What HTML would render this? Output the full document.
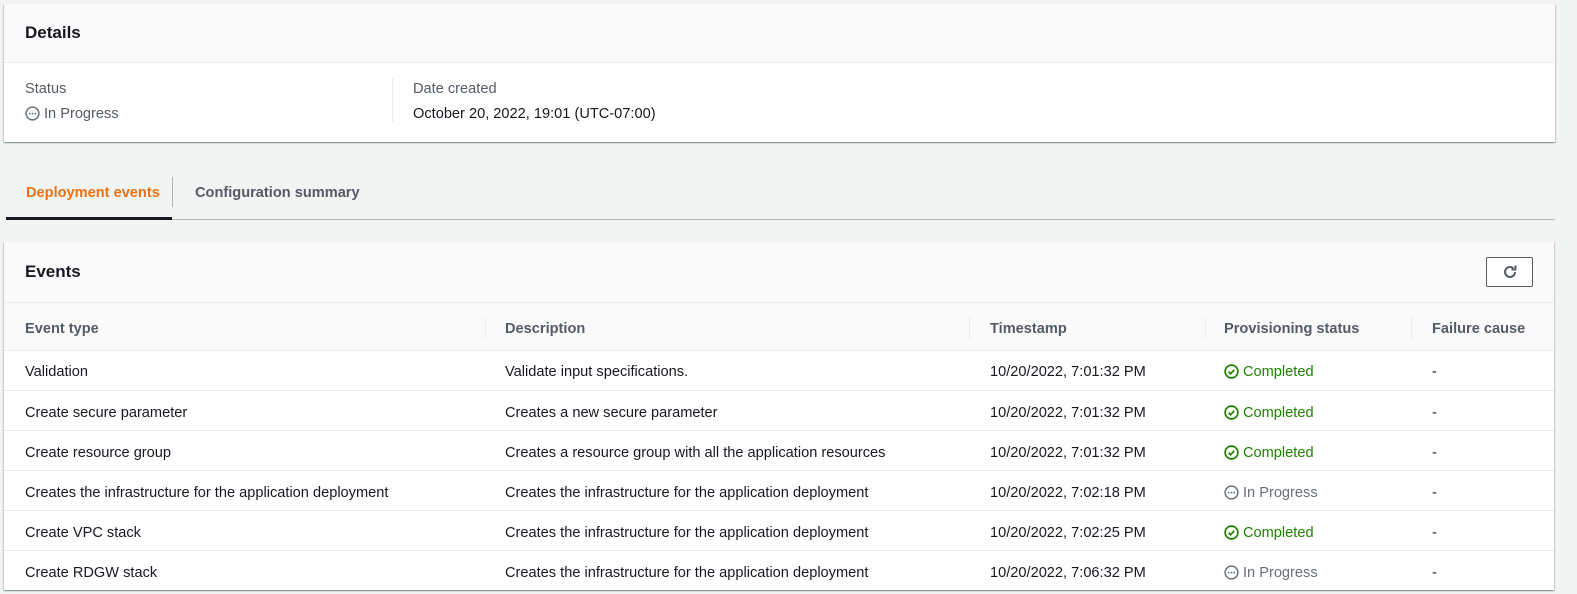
<!DOCTYPE html>
<html><head><style>
html,body{overflow:hidden}
body{margin:0;width:1577px;height:594px;background:#f2f3f3;font-family:"Liberation Sans",sans-serif;font-size:14.6px;color:#16191f;position:relative}
.card{position:absolute;background:#fff;box-shadow:0 1px 1px 0 rgba(0,28,36,.3),1px 1px 1px 0 rgba(0,28,36,.15),-1px 1px 1px 0 rgba(0,28,36,.15)}
.a{position:absolute}
.h2{font-weight:bold;font-size:17px;position:absolute;left:21px}
.lbl{color:#545b64}
.th{position:absolute;top:2px;height:48px;line-height:48px;font-weight:bold;color:#545b64}
.div{position:absolute;top:14px;height:22px;border-left:1px solid #eaeded}
.row{position:absolute;left:0;width:100%;height:40px;border-top:1px solid #eaeded;box-sizing:border-box;line-height:39px}
.row span{position:absolute;top:3px}
.ok{color:#1d8102}.ip{color:#687078}
svg{vertical-align:-3px;margin-right:4px}
</style></head><body>
<div class="card" style="left:4px;top:4px;width:1551px;height:138px">
 <div class="a" style="left:0;top:0;width:100%;height:58px;background:#fafafa;border-bottom:1px solid #eaeded"><div class="h2" style="top:19px">Details</div></div>
 <div class="a lbl" style="left:21px;top:77px">Status</div>
 <div class="a" style="left:21px;top:102px;color:#545b64"><svg width="15" height="15" viewBox="0 0 16 16"><circle cx="8" cy="8" r="6.8" fill="none" stroke="#687078" stroke-width="1.6"/><circle cx="5" cy="8" r="1" fill="#687078"/><circle cx="8" cy="8" r="1" fill="#687078"/><circle cx="11" cy="8" r="1" fill="#687078"/></svg>In Progress</div>
 <div class="a" style="left:388px;top:74px;height:44px;border-left:1px solid #eaeded"></div>
 <div class="a lbl" style="left:409px;top:77px">Date created</div>
 <div class="a" style="left:409px;top:102px">October 20, 2022, 19:01 (UTC-07:00)</div>
</div>
<div class="a" style="left:6px;top:219px;width:1549px;border-top:1px solid #aab7b8"></div>
<div class="a" style="left:6px;top:217px;width:166px;border-top:3px solid #16191f"></div>
<div class="a" style="left:26px;top:185px;font-weight:bold;color:#ec7211">Deployment events</div>
<div class="a" style="left:172px;top:177px;height:30px;border-left:1px solid #aab7b8"></div>
<div class="a" style="left:195px;top:185px;font-weight:bold;color:#545b64">Configuration summary</div>
<div class="card" style="left:4px;top:242px;width:1550px;height:348px">
 <div class="a" style="left:0;top:0;width:100%;height:60px;background:#fafafa;border-bottom:1px solid #eaeded"><div class="h2" style="top:20px">Events</div>
  <div class="a" style="left:1482px;top:15px;width:47px;height:30px;border:1px solid #545b64;border-radius:2px;background:#fff;box-sizing:border-box;text-align:center"><svg width="16" height="16" viewBox="0 0 16 16" style="margin:6px 0 0 0"><path d="M13 8a5 5 0 1 1-1.6-3.7" fill="none" stroke="#545b64" stroke-width="2"/><path d="M13.5 1.5v4h-4" fill="none" stroke="#545b64" stroke-width="2"/></svg></div>
 </div>
 <div class="a" style="left:0;top:61px;width:100%;height:47px;background:#fafafa;border-bottom:1px solid #eaeded">
  <div class="th" style="left:21px">Event type</div>
  <div class="div" style="left:481px"></div><div class="th" style="left:501px">Description</div>
  <div class="div" style="left:965px"></div><div class="th" style="left:986px">Timestamp</div>
  <div class="div" style="left:1201px"></div><div class="th" style="left:1220px">Provisioning status</div>
  <div class="div" style="left:1407px"></div><div class="th" style="left:1428px">Failure cause</div>
 </div>
 <div class="a" style="top:108px;left:0;width:100%">
  <div class="row" style="top:0;border-top:none"><span style="left:21px">Validation</span><span style="left:501px">Validate input specifications.</span><span style="left:986px">10/20/2022, 7:01:32 PM</span><span class="ok" style="left:1220px"><svg width="15" height="15" viewBox="0 0 16 16"><circle cx="8" cy="8" r="6.8" fill="none" stroke="#1d8102" stroke-width="1.8"/><path d="M4.8 8.2l2.2 2.2 4-4.2" fill="none" stroke="#1d8102" stroke-width="1.8"/></svg>Completed</span><span style="left:1428px">-</span></div>
  <div class="row" style="top:40px"><span style="left:21px">Create secure parameter</span><span style="left:501px">Creates a new secure parameter</span><span style="left:986px">10/20/2022, 7:01:32 PM</span><span class="ok" style="left:1220px"><svg width="15" height="15" viewBox="0 0 16 16"><circle cx="8" cy="8" r="6.8" fill="none" stroke="#1d8102" stroke-width="1.8"/><path d="M4.8 8.2l2.2 2.2 4-4.2" fill="none" stroke="#1d8102" stroke-width="1.8"/></svg>Completed</span><span style="left:1428px">-</span></div>
  <div class="row" style="top:80px"><span style="left:21px">Create resource group</span><span style="left:501px">Creates a resource group with all the application resources</span><span style="left:986px">10/20/2022, 7:01:32 PM</span><span class="ok" style="left:1220px"><svg width="15" height="15" viewBox="0 0 16 16"><circle cx="8" cy="8" r="6.8" fill="none" stroke="#1d8102" stroke-width="1.8"/><path d="M4.8 8.2l2.2 2.2 4-4.2" fill="none" stroke="#1d8102" stroke-width="1.8"/></svg>Completed</span><span style="left:1428px">-</span></div>
  <div class="row" style="top:120px"><span style="left:21px">Creates the infrastructure for the application deployment</span><span style="left:501px">Creates the infrastructure for the application deployment</span><span style="left:986px">10/20/2022, 7:02:18 PM</span><span class="ip" style="left:1220px"><svg width="15" height="15" viewBox="0 0 16 16"><circle cx="8" cy="8" r="6.8" fill="none" stroke="#687078" stroke-width="1.6"/><circle cx="5" cy="8" r="1" fill="#687078"/><circle cx="8" cy="8" r="1" fill="#687078"/><circle cx="11" cy="8" r="1" fill="#687078"/></svg>In Progress</span><span style="left:1428px">-</span></div>
  <div class="row" style="top:160px"><span style="left:21px">Create VPC stack</span><span style="left:501px">Creates the infrastructure for the application deployment</span><span style="left:986px">10/20/2022, 7:02:25 PM</span><span class="ok" style="left:1220px"><svg width="15" height="15" viewBox="0 0 16 16"><circle cx="8" cy="8" r="6.8" fill="none" stroke="#1d8102" stroke-width="1.8"/><path d="M4.8 8.2l2.2 2.2 4-4.2" fill="none" stroke="#1d8102" stroke-width="1.8"/></svg>Completed</span><span style="left:1428px">-</span></div>
  <div class="row" style="top:200px"><span style="left:21px">Create RDGW stack</span><span style="left:501px">Creates the infrastructure for the application deployment</span><span style="left:986px">10/20/2022, 7:06:32 PM</span><span class="ip" style="left:1220px"><svg width="15" height="15" viewBox="0 0 16 16"><circle cx="8" cy="8" r="6.8" fill="none" stroke="#687078" stroke-width="1.6"/><circle cx="5" cy="8" r="1" fill="#687078"/><circle cx="8" cy="8" r="1" fill="#687078"/><circle cx="11" cy="8" r="1" fill="#687078"/></svg>In Progress</span><span style="left:1428px">-</span></div>
 </div>
</div>
</body></html>
